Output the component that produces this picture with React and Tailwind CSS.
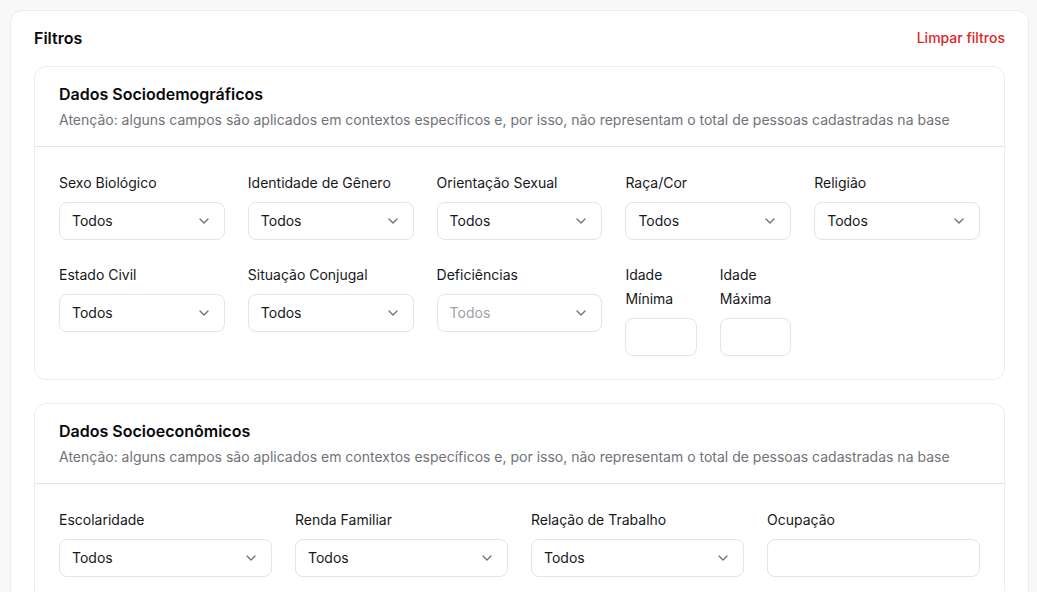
import { ChevronDown } from 'lucide-react'

const SelectBox = ({ value = 'Todos', muted = false }) => (
  <div className="h-[38px] w-full rounded-lg border border-[#e4e4e7] bg-white pl-3 pr-3 flex items-center justify-between">
    <span className={`text-sm ${muted ? 'text-[#a1a1aa]' : 'text-[#18181b]'}`}>{value}</span>
    <ChevronDown size={16} strokeWidth={2} className="text-[#71717a]" />
  </div>
)

const TextBox = () => (
  <div className="h-[38px] w-full rounded-lg border border-[#e4e4e7] bg-white" />
)

const Field = ({ label, children }) => (
  <div className="flex flex-col min-w-0">
    <label className="text-sm leading-6 text-[#18181b] mb-[7px]">{label}</label>
    {children}
  </div>
)

const Section = ({ title, children }) => (
  <div className="rounded-xl border border-[#ececee] bg-white">
    <div className="px-6 pt-[15px] pb-4 border-b border-[#e4e4e7]">
      <h3 className="text-base leading-6 font-semibold text-[#09090b]">{title}</h3>
      <p className="mt-1 text-sm leading-5 text-[#71717a]">
        Atenção: alguns campos são aplicados em contextos específicos e, por isso, não representam o total de pessoas cadastradas na base
      </p>
    </div>
    <div className="px-6 pt-6 pb-[23px]">{children}</div>
  </div>
)

export default function App() {
  return (
    <div className="h-[592px] overflow-hidden bg-[#f8f8f8] pt-[10px] pl-[10px] pr-[8px] font-['Inter',sans-serif]">
      <div className="rounded-xl border border-[#ececee] bg-white px-[23px] pt-[15px] pb-6">
        <div className="flex items-center justify-between mb-4">
          <h2 className="text-base leading-6 font-semibold text-[#09090b]">Filtros</h2>
          <button className="text-sm leading-6 font-medium text-[#dc2626]">Limpar filtros</button>
        </div>

        <div className="flex flex-col gap-[23px]">
          <Section title="Dados Sociodemográficos">
            <div className="grid grid-cols-5 gap-x-[23px] gap-y-[23px]">
              <Field label="Sexo Biológico"><SelectBox /></Field>
              <Field label="Identidade de Gênero"><SelectBox /></Field>
              <Field label="Orientação Sexual"><SelectBox /></Field>
              <Field label="Raça/Cor"><SelectBox /></Field>
              <Field label="Religião"><SelectBox /></Field>
              <Field label="Estado Civil"><SelectBox /></Field>
              <Field label="Situação Conjugal"><SelectBox /></Field>
              <Field label="Deficiências"><SelectBox muted /></Field>
              <div className="grid grid-cols-2 gap-[23px]">
                <Field label="Idade Mínima"><TextBox /></Field>
                <Field label="Idade Máxima"><TextBox /></Field>
              </div>
            </div>
          </Section>

          <Section title="Dados Socioeconômicos">
            <div className="grid grid-cols-4 gap-x-[23px] gap-y-[23px]">
              <Field label="Escolaridade"><SelectBox /></Field>
              <Field label="Renda Familiar"><SelectBox /></Field>
              <Field label="Relação de Trabalho"><SelectBox /></Field>
              <Field label="Ocupação"><TextBox /></Field>
            </div>
          </Section>
        </div>
      </div>
    </div>
  )
}
